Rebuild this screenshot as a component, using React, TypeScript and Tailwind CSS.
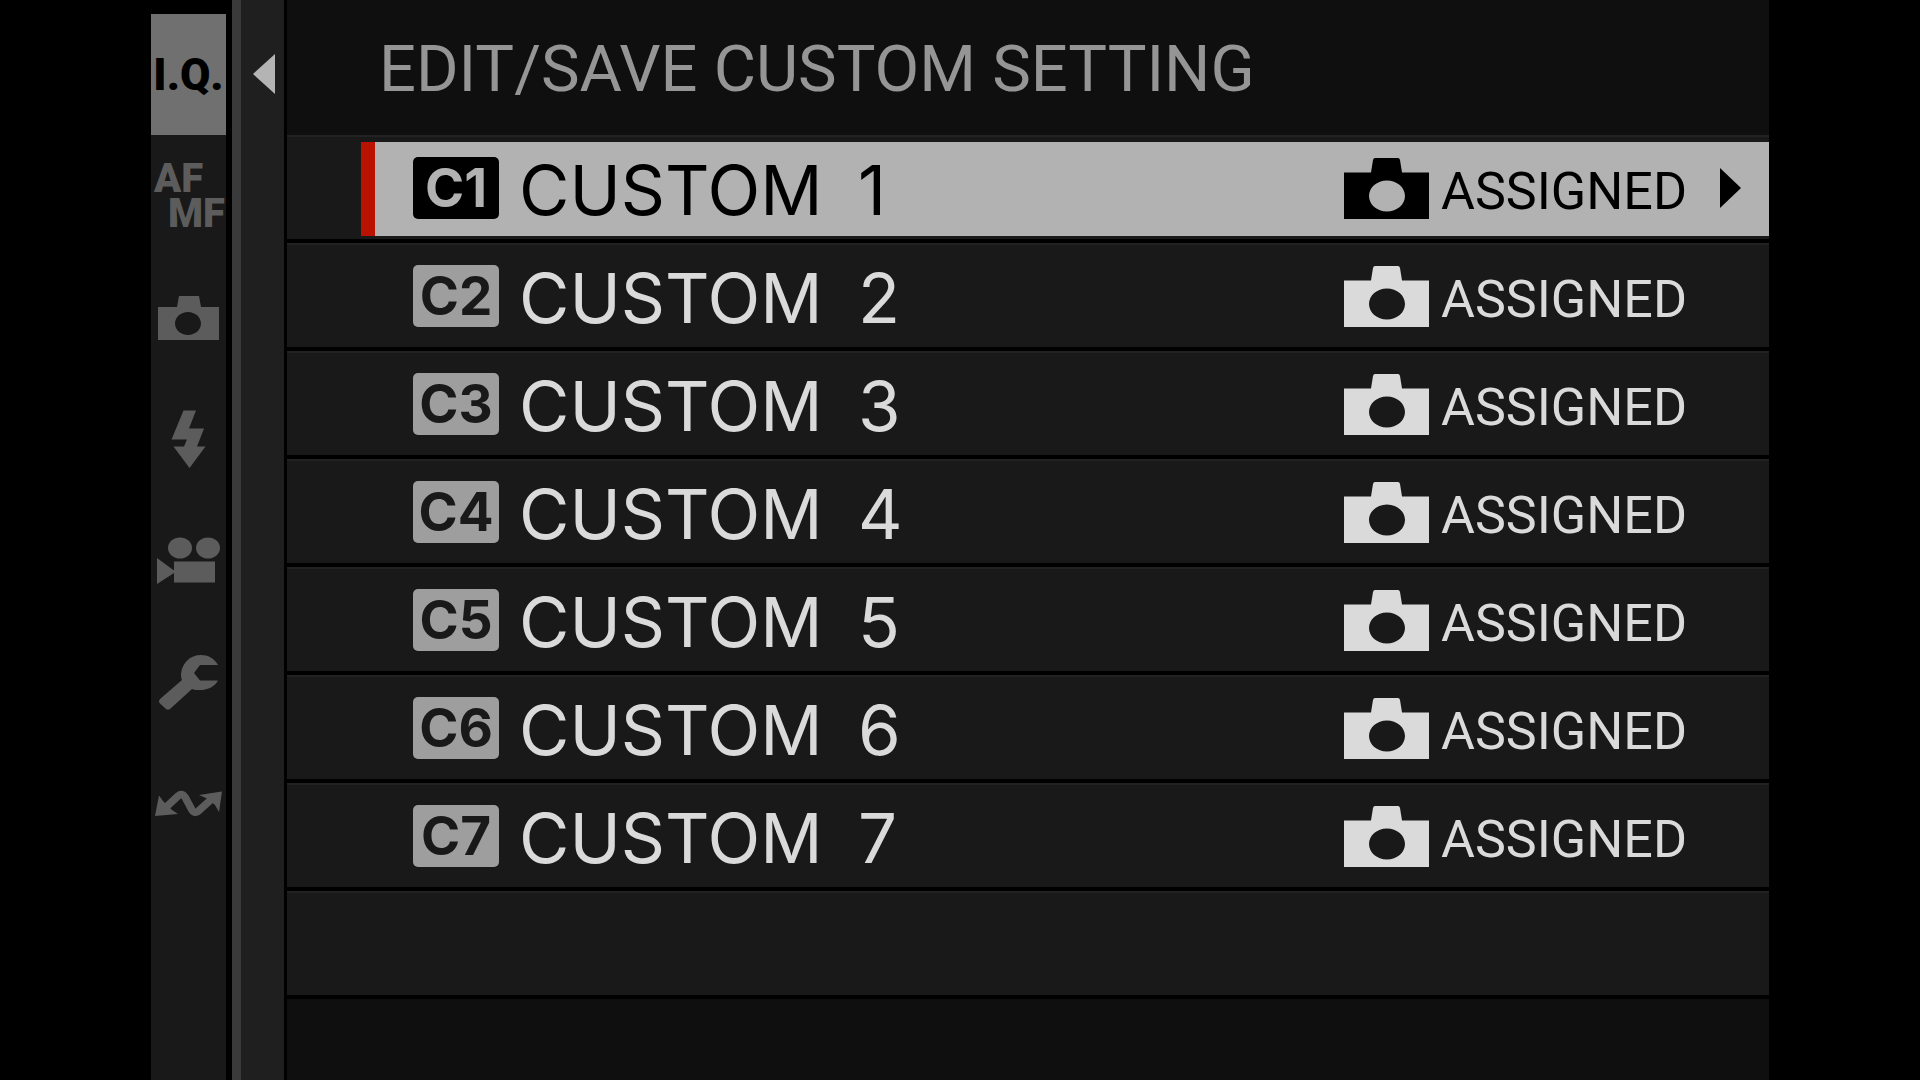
import type { ReactNode } from "react";
import { clsx } from "clsx";

type Tab = { id: string; label: string; icon: ReactNode };

const tabs: Tab[] = [
  {
    id: "iq",
    label: "Image quality",
    icon: <span className="font-[Roboto,sans-serif] text-[44px] leading-none font-black">I.Q.</span>,
  },
  {
    id: "focus",
    label: "Focus",
    icon: (
      <span className="flex w-full flex-col font-[Roboto,sans-serif] text-[40px] leading-[35px] font-black">
        <span className="self-start pl-[3px]">AF</span>
        <span className="self-end pr-[1px]">MF</span>
      </span>
    ),
  },
  {
    id: "shooting",
    label: "Shooting",
    icon: (
      <TabIcon>
        <path
          fillRule="evenodd"
          d="M7 50h19l2-11h20l2 11h18v33H7zM37 55c-7 0-13 5-13 11.500s6 11.500 13 11.500 13-5 13-11.500S44 55 37 55z"
        />
      </TabIcon>
    ),
  },
  {
    id: "flash",
    label: "Flash",
    icon: (
      <TabIcon>
        <path d="M32.500 32.500H45L38 50.500h15l-7 18h8.500L38.500 90 22.500 68.500H33l3-7H20.500z" />
      </TabIcon>
    ),
  },
  {
    id: "movie",
    label: "Movie",
    icon: (
      <TabIcon>
        <ellipse cx="29" cy="49" rx="12" ry="10.500" />
        <ellipse cx="57" cy="49" rx="12" ry="10.500" />
        <path d="M6 59l17 12.500V62.500h41v21H23v-9.500L6 85z" />
      </TabIcon>
    ),
  },
  {
    id: "setup",
    label: "Set up",
    icon: (
      <TabIcon>
        <path d="M67 45H49l-6 8 6 7.500h18c-4 7-11 9.500-18 9.500-3 0-6 0-8-1L19 89q-2 1.500-4 0l-6-5.500q-2-2 0-4.500L31 60c-1-2-1-4-1-6 1-11 9-19 20-19 7 0 13 3 17 10z" />
      </TabIcon>
    ),
  },
  {
    id: "network",
    label: "Network",
    icon: (
      <TabIcon>
        <path
          d="M12 69L27 55Q31 51.500 34 56L41 69Q44 73.500 48 69.500L63 56"
          fill="none"
          stroke="currentColor"
          strokeWidth="7.500"
        />
        <path d="M4 75L8 54.500 12 60 21 69 27 73zM71 50.500L48 54l9 4 7 6 4 7z" />
      </TabIcon>
    ),
  },
];

const settings = [1, 2, 3, 4, 5, 6, 7];

function TabIcon({ children }: { children: ReactNode }) {
  return (
    <svg viewBox="0 0 75 120" className="h-[120px] w-[75px]" fill="currentColor" aria-hidden="true">
      {children}
    </svg>
  );
}

function CameraIcon() {
  return (
    <svg viewBox="0 0 85 61" className="h-[61px] w-[85px] shrink-0" fill="currentColor" aria-hidden="true">
      <path
        fillRule="evenodd"
        d="M0 14.500h27L29 2q.5-2 2-2h23q1.500 0 2 2l2 12.500h27V61H0zM43 22.500c-10 0-18 7-18 15.500s8 15.500 18 15.500S61 46.500 61 38s-8-15.500-18-15.500z"
      />
    </svg>
  );
}

function SettingRow({ number, selected }: { number: number; selected: boolean }) {
  return (
    <li className="h-[108px] border-t-2 border-b-4 border-t-[#222222] border-b-black bg-[#191919] pt-[5px] pl-[74px]">
      <button
        type="button"
        className={clsx(
          "flex h-[94px] w-full items-center border-l-[14px] pr-7 pb-[2px] pl-[38px]",
          selected ? "border-[#b91200] bg-[#b2b2b2] text-black" : "border-transparent text-[#dadada]",
        )}
      >
        <span
          className={clsx(
            "flex h-[62px] w-[86px] shrink-0 items-center justify-center rounded-[5px] font-[Inter,sans-serif] text-[53px] leading-none font-bold",
            selected ? "bg-black text-[#b2b2b2]" : "bg-[#9e9e9e] text-[#191919]",
          )}
        >
          C{number}
        </span>
        <span className="pt-1 pl-5 font-[Inter,sans-serif] text-[69px] leading-none">
          CUSTOM <span className="pl-4">{number}</span>
        </span>
        <span className="ml-auto flex items-center gap-3">
          <CameraIcon />
          <span className="w-[244px] pt-2 text-left font-[Roboto,sans-serif] text-[52px] leading-none">
            ASSIGNED
          </span>
        </span>
        <svg
          viewBox="0 0 21 40"
          className={clsx("ml-[35px] h-10 w-[21px] shrink-0", !selected && "invisible")}
          fill="currentColor"
          aria-hidden="true"
        >
          <path d="M0 0l21 20L0 40z" />
        </svg>
      </button>
    </li>
  );
}

export default function App() {
  return (
    <div className="flex min-h-screen bg-black px-[151px]">
      <nav className="flex w-[75px] shrink-0 flex-col pt-[14px]" aria-label="Menu">
        {tabs.map((tab) => (
          <button
            key={tab.id}
            type="button"
            aria-label={tab.label}
            className={clsx(
              "flex h-[121px] shrink-0 items-center justify-center",
              tab.id === "iq" ? "bg-[#707070] text-black" : "bg-[#191919] text-[#5c5c5c]",
            )}
          >
            {tab.icon}
          </button>
        ))}
        <div className="flex-1 bg-[#191919]" />
      </nav>

      <div className="ml-[6px] w-[55px] shrink-0 border-r-[3px] border-l-[9px] border-r-black border-l-[#3a3a3a] bg-[#1f1f1f] pt-[54px]">
        <button type="button" aria-label="Back" className="ml-3 block text-[#b4b4b4]">
          <svg viewBox="0 0 22 40" className="h-10 w-[22px]" fill="currentColor" aria-hidden="true">
            <path d="M22 0L0 20l22 20z" />
          </svg>
        </button>
      </div>

      <main className="flex-1 bg-[#0f0f0f]">
        <header className="flex h-[135px] items-center pt-1 pl-[92px]">
          <h1 className="font-[Roboto,sans-serif] text-[65px] leading-none text-[#959595]">
            EDIT/SAVE CUSTOM SETTING
          </h1>
        </header>
        <ul>
          {settings.map((number) => (
            <SettingRow key={number} number={number} selected={number === 1} />
          ))}
          <li className="h-[108px] border-t-2 border-b-4 border-t-[#222222] border-b-black bg-[#191919]" />
        </ul>
      </main>
    </div>
  );
}
